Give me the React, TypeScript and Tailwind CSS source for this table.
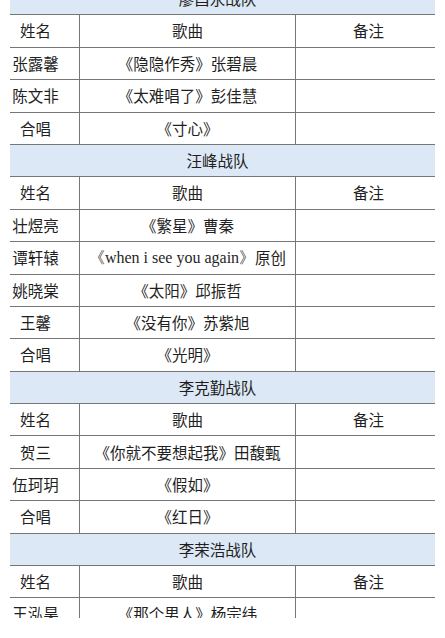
import React from 'react';

type Team = {
  name: string;
  rows: [string, React.ReactNode][];
};

const teams: Team[] = [
  {
    name: '廖昌永战队',
    rows: [
      ['张露馨', '《隐隐作秀》张碧晨'],
      ['陈文非', '《太难唱了》彭佳慧'],
      ['合唱', '《寸心》'],
    ],
  },
  {
    name: '汪峰战队',
    rows: [
      ['壮煜亮', '《繁星》曹秦'],
      [
        '谭轩辕',
        <>
          <span className="font-['Liberation_Serif',serif] text-[16px]">《when i see you again》</span>原创
        </>,
      ],
      ['姚晓棠', '《太阳》邱振哲'],
      ['王馨', '《没有你》苏紫旭'],
      ['合唱', '《光明》'],
    ],
  },
  {
    name: '李克勤战队',
    rows: [
      ['贺三', '《你就不要想起我》田馥甄'],
      ['伍珂玥', '《假如》'],
      ['合唱', '《红日》'],
    ],
  },
  {
    name: '李荣浩战队',
    rows: [['王泓昊', '《那个男人》杨宗纬']],
  },
];

function Row({ name, song, note }: { name: React.ReactNode; song: React.ReactNode; note?: React.ReactNode }) {
  return (
    <div className="flex h-[32.4px] border-b border-[#767676]">
      <div className="w-[70px] flex items-center justify-center pr-[18px] border-r border-[#767676] whitespace-nowrap">{name}</div>
      <div className="w-[216px] flex items-center justify-center border-r border-[#767676] whitespace-nowrap">{song}</div>
      <div className="flex-1 flex items-center justify-center pl-[6px]">{note}</div>
    </div>
  );
}

export default function App() {
  return (
    <div className="w-[445px] h-[638px] bg-white overflow-hidden">
      <div className="h-[618px] overflow-hidden px-[10px]">
        <div className="-mt-[17px] text-[15.5px] text-[#1f1f1f] font-['Noto_Sans_CJK_SC',sans-serif]">
          {teams.map((team) => (
            <div key={team.name}>
              <div className="h-[32.4px] flex items-center justify-center pr-[10px] bg-[#dce8f5] border-b border-[#767676]">
                {team.name}
              </div>
              <Row name="姓名" song="歌曲" note="备注" />
              {team.rows.map(([n, s]) => (
                <Row key={n + team.name} name={n} song={s} />
              ))}
            </div>
          ))}
        </div>
      </div>
    </div>
  );
}
